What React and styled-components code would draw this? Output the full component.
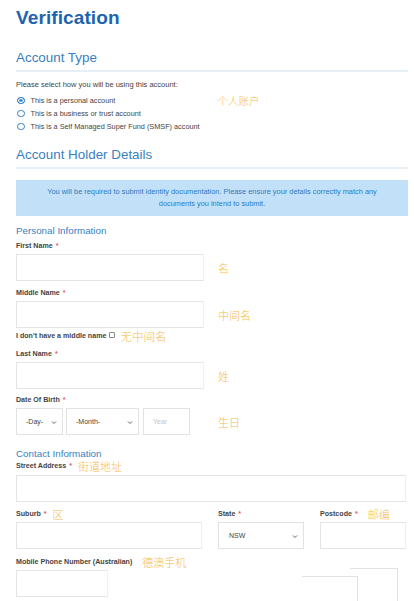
import React from 'react';
import styled, { createGlobalStyle } from 'styled-components';

const GlobalStyle = createGlobalStyle`
  html, body {
    margin: 0;
    padding: 0;
    background: #ffffff;
  }
  body {
    font-family: "Liberation Sans", Arial, sans-serif;
    color: #333333;
  }
  * { box-sizing: border-box; }
`;

const Page = styled.div`
  width: 414px;
  height: 601px;
  overflow: hidden;
  padding: 6px 6px 0 16px;
`;

const Title = styled.h1`
  margin: 0;
  font-size: 19px;
  line-height: 23px;
  font-weight: 700;
  color: #1d64ae;
  letter-spacing: 0.1px;
`;

const SectionTitle = styled.h2`
  margin: ${p => p.$top}px 0 0 0;
  font-size: 13.4px;
  line-height: 16px;
  font-weight: 400;
  color: #3a7fbf;
  padding-bottom: 4px;
  border-bottom: 2px solid #e6eef6;
`;

const Prompt = styled.p`
  margin: 8px 0 4px 0;
  font-size: 7.5px;
  line-height: 10px;
  color: #444444;
`;

const RadioRow = styled.label`
  display: flex;
  align-items: center;
  height: 13px;
  font-size: 7.3px;
  color: #444444;
`;

const RadioDot = styled.span`
  flex: none;
  width: 7.5px;
  height: 7.5px;
  border-radius: 50%;
  border: 1.3px solid #2f7fcc;
  margin: 0 6px 0 1px;
  background: ${p => (p.$on ? '#2f7fcc' : '#fff')};
  box-shadow: ${p => (p.$on ? 'inset 0 0 0 1.2px #ffffff' : 'none')};
`;

const RadioText = styled.span`
  width: 187px;
  white-space: nowrap;
`;

const Note = styled.span`
  font-family: "Noto Sans CJK SC", "Noto Sans", sans-serif;
  font-size: ${p => p.$size || 11}px;
  line-height: 12px;
  color: #f7bb4e;
  font-weight: 300;
  margin-left: ${p => p.$gap || 0}px;
  white-space: nowrap;
`;

const InfoBox = styled.div`
  margin-top: 11px;
  height: 36px;
  background: #c2e1f9;
  display: flex;
  align-items: center;
  justify-content: center;
  padding: 0 18px;
  text-align: center;
  font-size: 7.4px;
  line-height: 12px;
  color: #2f78bd;
`;

const SubTitle = styled.h3`
  margin: ${p => p.$top}px 0 0 0;
  font-size: 9.8px;
  line-height: 12px;
  font-weight: 400;
  color: #3a7fbf;
`;

const Label = styled.div`
  display: flex;
  align-items: center;
  height: 10px;
  margin-top: ${p => p.$top ?? 4}px;
  font-size: 7.1px;
  font-weight: 700;
  color: #444444;
  white-space: nowrap;
`;

const Star = styled.span`
  color: #e0585e;
  margin-left: 3px;
`;

const FieldRow = styled.div`
  display: flex;
  align-items: center;
  margin-top: ${p => p.$top ?? 3}px;
  gap: ${p => p.$gap ?? 0}px;
`;

const Input = styled.div`
  width: ${p => p.$w}px;
  height: 27px;
  border: 1px solid #e4e4e4;
  border-right-color: #f0f0f0;
  background: #ffffff;
  flex: none;
`;

const Select = styled.div`
  position: relative;
  width: ${p => p.$w}px;
  height: 27px;
  border: 1px solid #e2e2e2;
  display: flex;
  align-items: center;
  padding-left: ${p => p.$pad ?? 9}px;
  font-size: 7px;
  color: ${p => (p.$muted ? '#c4c4c4' : '#444444')};
  flex: none;
`;

const Chevron = styled.svg`
  position: absolute;
  right: 5px;
  top: 11px;
  width: 6px;
  height: 5px;
`;

const CheckRow = styled.div`
  display: flex;
  align-items: center;
  height: 11px;
  margin-top: 2px;
  font-size: 7.1px;
  font-weight: 700;
  color: #444444;
  white-space: nowrap;
`;

const CheckBox = styled.span`
  width: 6px;
  height: 6px;
  border: 0.8px solid #888888;
  border-radius: 1px;
  margin-left: 3px;
  margin-bottom: 2px;
`;

const AddressGrid = styled.div`
  display: grid;
  grid-template-columns: 202px 102px 86px;
  margin-top: 7px;
`;

const Col = styled.div`
  display: flex;
  flex-direction: column;
`;

const BottomRow = styled.div`
  display: flex;
  align-items: flex-start;
  margin-top: 3px;
`;

const Ghost = styled.div`
  flex: none;
  width: ${p => p.$w}px;
  height: 40px;
  margin-top: ${p => p.$top}px;
  margin-left: ${p => p.$left}px;
  border-top: 1px solid #e2e2e2;
  border-right: 1px solid #e2e2e2;
`;

const ChevronIcon = () => (
  <Chevron viewBox="0 0 6 5">
    <path d="M1 1.5 L3 3.5 L5 1.5" fill="none" stroke="#555" strokeWidth="0.9" />
  </Chevron>
);

export default function App() {
  return (
    <>
      <GlobalStyle />
      <Page>
        <Title>Verification</Title>

        <SectionTitle $top={21}>Account Type</SectionTitle>
        <Prompt>Please select how you will be using this account:</Prompt>
        <RadioRow>
          <RadioDot $on />
          <RadioText>This is a personal account</RadioText>
          <Note $size={10.5}>个人账户</Note>
        </RadioRow>
        <RadioRow>
          <RadioDot />
          <RadioText>This is a business or trust account</RadioText>
        </RadioRow>
        <RadioRow>
          <RadioDot />
          <RadioText>This is a Self Managed Super Fund (SMSF) account</RadioText>
        </RadioRow>

        <SectionTitle $top={14}>Account Holder Details</SectionTitle>
        <InfoBox>
          You will be required to submit identity documentation. Please ensure your details correctly match any
          documents you intend to submit.
        </InfoBox>

        <SubTitle $top={9}>Personal Information</SubTitle>
        <Label>First Name<Star>*</Star></Label>
        <FieldRow $gap={14}>
          <Input $w={188} />
          <Note>名</Note>
        </FieldRow>

        <Label $top={7}>Middle Name<Star>*</Star></Label>
        <FieldRow $gap={14}>
          <Input $w={188} />
          <Note>中间名</Note>
        </FieldRow>
        <CheckRow>
          I don't have a middle name
          <CheckBox />
          <Note $gap={5} $size={11.5}>无中间名</Note>
        </CheckRow>

        <Label $top={8}>Last Name<Star>*</Star></Label>
        <FieldRow $gap={14}>
          <Input $w={188} />
          <Note>姓</Note>
        </FieldRow>

        <Label $top={6}>Date Of Birth<Star>*</Star></Label>
        <FieldRow $gap={3}>
          <Select $w={47}>-Day-<ChevronIcon /></Select>
          <Select $w={73}>-Month-<ChevronIcon /></Select>
          <Select $w={47} $muted style={{ marginLeft: 1 }}>Year</Select>
          <Note $gap={25}>生日</Note>
        </FieldRow>

        <SubTitle $top={13}>Contact Information</SubTitle>
        <Label $top={1}>
          Street Address<Star>*</Star>
          <Note $gap={6}>街道地址</Note>
        </Label>
        <FieldRow $top={4}>
          <Input $w={390} />
        </FieldRow>

        <AddressGrid>
          <Col>
            <Label $top={0}>Suburb<Star>*</Star><Note $gap={6}>区</Note></Label>
            <FieldRow>
              <Input $w={186} />
            </FieldRow>
          </Col>
          <Col>
            <Label $top={0}>State<Star>*</Star></Label>
            <FieldRow>
              <Select $w={86} $pad={10}>NSW<ChevronIcon /></Select>
            </FieldRow>
          </Col>
          <Col>
            <Label $top={0}>Postcode<Star>*</Star><Note $gap={10}>邮编</Note></Label>
            <FieldRow>
              <Input $w={86} />
            </FieldRow>
          </Col>
        </AddressGrid>

        <Label $top={8}>
          Mobile Phone Number (Australian)
          <Note $gap={10}>德澳手机</Note>
        </Label>
        <BottomRow>
          <Input $w={92} />
          <Ghost $w={56} $top={6} $left={194} />
          <Ghost $w={48} $top={-2} $left={-8} />
        </BottomRow>
      </Page>
    </>
  );
}
